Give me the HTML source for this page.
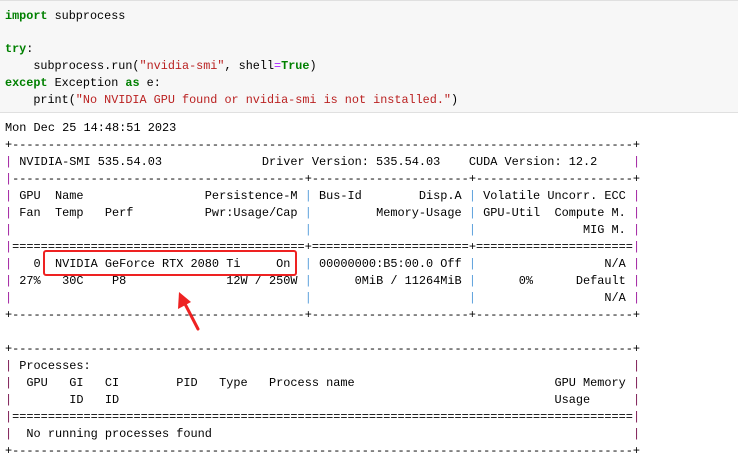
<!DOCTYPE html>
<html><head><style>
html,body{margin:0;padding:0;background:#fff;width:738px;height:455px;overflow:hidden;}
.code{position:absolute;left:0;top:0;width:738px;height:113px;background:#f7f7f7;border-top:1px solid #e0e0e0;border-bottom:1px solid #e0e0e0;box-sizing:border-box;}
pre{margin:0;font-family:"Liberation Mono",monospace;white-space:pre;}
.c{position:absolute;left:5px;top:8px;font-size:11.8px;line-height:16.7px;color:#000;}
.o{position:absolute;left:5px;top:120px;font-size:11.9px;line-height:17px;color:#000;}
.k{color:#008000;font-weight:bold}
.s{color:#ba2121}
.p{color:#aa22ff}
.e{color:#a020a0}
.m{color:#5a9fdc}
.d{color:#7a1550}
.box{position:absolute;left:43px;top:250px;width:254px;height:26px;border:2px solid #ee2222;border-radius:3px;box-sizing:border-box;}
</style></head><body>
<div class="code"></div>
<pre class="c"><span class="k">import</span> subprocess

<span class="k">try</span>:
    subprocess.run(<span class="s">"nvidia-smi"</span>, shell<span class="p">=</span><span class="k">True</span>)
<span class="k">except</span> Exception <span class="k">as</span> e:
    print(<span class="s">"No NVIDIA GPU found or nvidia-smi is not installed."</span>)</pre>
<pre class="o">Mon Dec 25 14:48:51 2023
+---------------------------------------------------------------------------------------+
<span class="e">|</span> NVIDIA-SMI 535.54.03              Driver Version: 535.54.03    CUDA Version: 12.2     <span class="e">|</span>
<span class="e">|</span>-----------------------------------------+----------------------+----------------------+
<span class="e">|</span> GPU  Name                 Persistence-M <span class="m">|</span> Bus-Id        Disp.A <span class="m">|</span> Volatile Uncorr. ECC <span class="e">|</span>
<span class="e">|</span> Fan  Temp   Perf          Pwr:Usage/Cap <span class="m">|</span>         Memory-Usage <span class="m">|</span> GPU-Util  Compute M. <span class="e">|</span>
<span class="e">|</span>                                         <span class="m">|</span>                      <span class="m">|</span>               MIG M. <span class="e">|</span>
<span class="e">|</span>=========================================+======================+======================<span class="e">|</span>
<span class="e">|</span>   0  NVIDIA GeForce RTX 2080 Ti     On  <span class="m">|</span> 00000000:B5:00.0 Off <span class="m">|</span>                  N/A <span class="e">|</span>
<span class="e">|</span> 27%   30C    P8              12W / 250W <span class="m">|</span>      0MiB / 11264MiB <span class="m">|</span>      0%      Default <span class="e">|</span>
<span class="e">|</span>                                         <span class="m">|</span>                      <span class="m">|</span>                  N/A <span class="e">|</span>
+-----------------------------------------+----------------------+----------------------+

+---------------------------------------------------------------------------------------+
<span class="d">|</span> Processes:                                                                            <span class="d">|</span>
<span class="d">|</span>  GPU   GI   CI        PID   Type   Process name                            GPU Memory <span class="d">|</span>
<span class="d">|</span>        ID   ID                                                             Usage      <span class="d">|</span>
<span class="d">|</span>=======================================================================================<span class="d">|</span>
<span class="d">|</span>  No running processes found                                                           <span class="d">|</span>
+---------------------------------------------------------------------------------------+</pre>
<div class="box"></div>
<svg style="position:absolute;left:0;top:0" width="738" height="455">
<line x1="198" y1="329" x2="184" y2="302" stroke="#ee2222" stroke-width="3" stroke-linecap="round"/>
<polygon points="179,292 178,309 191,302" fill="#ee2222"/>
</svg>
</body></html>
